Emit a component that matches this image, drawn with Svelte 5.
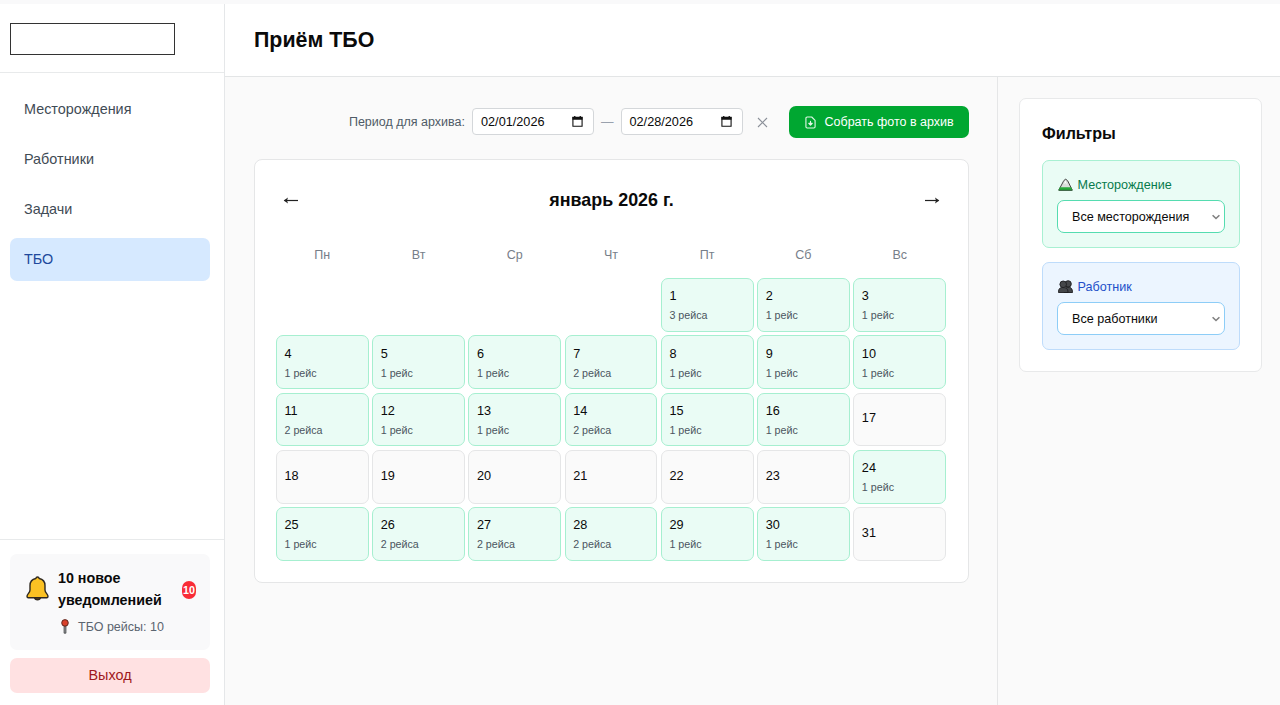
<script>
  const navItems = ['Месторождения', 'Работники', 'Задачи', 'ТБО'];
  let activeItem = $state('ТБО');

  const weekdays = ['Пн', 'Вт', 'Ср', 'Чт', 'Пт', 'Сб', 'Вс'];
  const offset = 4;

  // trips per day, index 0 is the 1st
  const trips = [
    3, 1, 1,
    1, 1, 1, 2, 1, 1, 1,
    2, 1, 1, 2, 1, 1, 0,
    0, 0, 0, 0, 0, 0, 1,
    1, 2, 2, 2, 1, 1, 0,
  ];

  const period = { from: '02/01/2026', to: '02/28/2026' };

  const tripLabel = (n) => (n === 1 ? `${n} рейс` : `${n} рейса`);
</script>

{#snippet dateField(value)}
  <button class="date-field">
    <span>{value}</span>
    <svg width="11" height="11" viewBox="0 0 12 12">
      <path d="M1 1.5h10v9.7H1z" fill="none" stroke="#111" stroke-width="1.2"/>
      <path d="M.5 1h11v3H.5zM2.3 0h1.4v2H2.3zM8.3 0h1.4v2H8.3z" fill="#111"/>
    </svg>
  </button>
{/snippet}

{#snippet selectField(value)}
  <button class="select-field">
    <span>{value}</span>
    <svg width="8" height="6" viewBox="0 0 8 6" fill="none" stroke="#808080" stroke-width="1.6">
      <path d="M.6 1.2L4 4.5l3.4-3.3"/>
    </svg>
  </button>
{/snippet}

<div class="app">
  <!-- Sidebar -->
  <aside class="sidebar">
    <div class="logo-area">
      <div class="logo"></div>
    </div>
    <nav>
      {#each navItems as item}
        <button class="nav-item" class:active={item === activeItem} onclick={() => (activeItem = item)}>{item}</button>
      {/each}
    </nav>
    <div class="sidebar-footer">
      <div class="notice">
        <div class="notice-main">
          <svg class="bell" width="23" height="25" viewBox="0 0 23 25" stroke="#30291f" stroke-width="1.4" stroke-linejoin="round">
            <path d="M8.500 21.500c.5 3 5.500 3 6 0z" fill="#8a5a14"/>
            <path d="M11.500 1c-1 0-1.500.6-1.700 1.500C6 3.300 4 6 4 9.500V14c0 2.800-3 4.200-3 6.200 0 .9.5 1.500 1.300 1.500h18.400c.8 0 1.300-.6 1.300-1.500 0-2-3-3.400-3-6.200V9.500c0-3.500-2-6.200-5.800-7C13 1.600 12.500 1 11.500 1z" fill="#fbc123"/>
          </svg>
          <div class="notice-title">10 новое уведомленией</div>
          <span class="badge">10</span>
        </div>
        <div class="notice-detail">
          <svg width="8" height="15" viewBox="0 0 8 15">
            <path d="M3 6h2v8.200H3z" fill="#8a8f93" stroke="#444" stroke-width=".7"/>
            <circle cx="4" cy="3.900" r="3.300" fill="#d9412b" stroke="#54251d" stroke-width=".9"/>
          </svg>
          <span>ТБО рейсы: 10</span>
        </div>
      </div>
      <button class="logout">Выход</button>
    </div>
  </aside>

  <main>
    <header>
      <h1>Приём ТБО</h1>
    </header>
    <div class="body">
      <section class="content">
        <!-- Archive toolbar -->
        <div class="toolbar">
          <span class="period-label">Период для архива:</span>
          {@render dateField(period.from)}
          <span class="dash">—</span>
          {@render dateField(period.to)}
          <button class="clear" aria-label="Сбросить">
            <svg width="11" height="11" viewBox="0 0 11 11" stroke="#8b9099" stroke-width="1.100">
              <path d="M1 1l9 9M10 1l-9 9"/>
            </svg>
          </button>
          <button class="archive">
            <svg width="11" height="13" viewBox="0 0 12 14" fill="none" stroke="#e4f8e9" stroke-width="1.200" stroke-linecap="round" stroke-linejoin="round">
              <path d="M7.300 1H2.400C1.600 1 1 1.600 1 2.400v9.200c0 .8.6 1.400 1.400 1.400h7.200c.8 0 1.400-.6 1.400-1.400V4.700z"/>
              <path d="M6 5.600v4.200M4.100 8L6 9.900 7.900 8z" fill="#e4f8e9"/>
            </svg>
            <span>Собрать фото в архив</span>
          </button>
        </div>

        <!-- Calendar -->
        <div class="calendar">
          <div class="month-bar">
            <button class="arrow" aria-label="Назад">
              <svg width="15" height="9" viewBox="0 0 15 9" fill="none" stroke="#222" stroke-width="1.200">
                <path d="M1.500 4.500H15"/><path d="M5 1.500l-4.300 3L5 7.500l-1-3z" fill="#222" stroke="none"/>
              </svg>
            </button>
            <h2>январь 2026 г.</h2>
            <button class="arrow" aria-label="Вперёд">
              <svg width="15" height="9" viewBox="0 0 15 9" fill="none" stroke="#222" stroke-width="1.200">
                <path d="M0 4.500h13.500"/><path d="M10 1.500l4.300 3-4.300 3 1-3z" fill="#222" stroke="none"/>
              </svg>
            </button>
          </div>
          <div class="weekdays">
            {#each weekdays as day}
              <div>{day}</div>
            {/each}
          </div>
          <div class="days">
            {#each Array(offset) as _}
              <div></div>
            {/each}
            {#each trips as count, i}
              <div class="day" class:has-trips={count > 0}>
                <div class="number">{i + 1}</div>
                {#if count}
                  <div class="trips">{tripLabel(count)}</div>
                {/if}
              </div>
            {/each}
          </div>
        </div>
      </section>

      <!-- Filters -->
      <aside class="filters">
        <div class="filter-card">
          <h3>Фильтры</h3>
          <div class="filter green">
            <div class="filter-label">
              <svg width="15" height="13" viewBox="0 0 15 13">
                <path d="M.8 12L5.500 3.200 7.500 1l2.200 1.800L14.200 12z" fill="#d9dedb" stroke="#444" stroke-width="1" stroke-linejoin="round"/>
                <path d="M7.500 2.500L6 6l1.500-1L9 7z" fill="#fff"/>
                <path d="M1.800 9.300h11.400l1.200 3H.6z" fill="#27a83b"/>
                <path d="M.5 12.300h14" stroke="#244a2b" stroke-width=".8"/>
              </svg>
              <span>Месторождение</span>
            </div>
            {@render selectField('Все месторождения')}
          </div>
          <div class="filter blue">
            <div class="filter-label">
              <svg width="15" height="13" viewBox="0 0 15 13" fill="#45474a" stroke="#1d1d1f" stroke-width=".9">
                <path d="M6 12.500c0-4 1.300-5.500 4-5.500s4.500 1.500 4.500 5.500z"/>
                <circle cx="10.100" cy="3.900" r="3.200"/>
                <path d="M.5 12.500c0-4 1.300-5 4.500-5s5 1 5 5z"/>
                <circle cx="5.200" cy="4.300" r="3.300"/>
              </svg>
              <span>Работник</span>
            </div>
            {@render selectField('Все работники')}
          </div>
        </div>
      </aside>
    </div>
  </main>
</div>

<style>
  :global(body) {
    background: #f9f9fa;
    overflow: hidden;
  }

  .app {
    display: flex;
    box-sizing: border-box;
    height: 705px;
    padding-top: 4px;
    font-family: 'Liberation Sans', Arial, sans-serif;
    color: #0a0a0a;
    background: #f9f9fa;
  }

  .app * { box-sizing: border-box; }

  button {
    font: inherit;
    color: inherit;
    background: none;
    border: none;
    padding: 0;
    cursor: pointer;
  }

  svg { display: block; flex: none; }
  h1, h2, h3 { margin: 0; font-weight: 700; }

  .sidebar {
    display: flex;
    flex-direction: column;
    flex: none;
    width: 225px;
    background: #fff;
    border-right: 1px solid #e5e7e9;
  }

  .logo-area {
    height: 69px;
    padding: 19px 10px;
    border-bottom: 1px solid #e8eaeb;
  }

  .logo {
    width: 165px;
    height: 32px;
    border: 1px solid #333;
  }

  nav {
    display: flex;
    flex-direction: column;
    gap: 7px;
    flex: 1;
    padding: 15px 14px 0 10px;
  }

  .nav-item {
    height: 43px;
    padding: 0 14px 2px;
    text-align: left;
    font-size: 14.4px;
    color: #3f4b55;
    border-radius: 7px;
  }

  .nav-item.active {
    background: #d6e9ff;
    color: #20489c;
  }

  .sidebar-footer {
    padding: 14px 14px 12px 10px;
    border-top: 1px solid #e8eaeb;
  }

  .notice {
    height: 96px;
    margin-bottom: 8px;
    padding: 14px 14px 0 16px;
    background: #f9f9fa;
    border-radius: 7px;
  }

  .notice-main {
    display: flex;
    align-items: center;
  }

  .bell { margin-bottom: 2px; }

  .notice-title {
    width: 124px;
    margin-left: 9px;
    font-size: 14.3px;
    font-weight: 700;
    line-height: 21.5px;
  }

  .badge {
    flex: none;
    width: 14px;
    height: 18px;
    line-height: 18px;
    text-align: center;
    font-size: 10.7px;
    font-weight: 700;
    color: #fff;
    background: #f92c37;
    border-radius: 7px;
  }

  .notice-detail {
    display: flex;
    align-items: center;
    gap: 9px;
    margin: 8px 0 0 35px;
    font-size: 12.5px;
    color: #5b6570;
  }

  .logout {
    width: 100%;
    height: 35px;
    padding-bottom: 2px;
    font-size: 14.4px;
    color: #9f1820;
    background: #ffe1e2;
    border-radius: 7px;
  }

  main {
    display: flex;
    flex-direction: column;
    flex: 1;
  }

  header {
    display: flex;
    align-items: center;
    height: 73px;
    padding-left: 29px;
    background: #fff;
    border-bottom: 1px solid #e3e5e6;
  }

  h1 { font-size: 21.4px; }

  .body {
    display: flex;
    flex: 1;
    background: #fafafa;
  }

  .content {
    flex: 1;
    padding: 29px 28.5px 0 28.5px;
  }

  .toolbar {
    display: flex;
    align-items: center;
    justify-content: flex-end;
    height: 32px;
    margin-bottom: 21px;
    font-size: 12.5px;
  }

  .period-label { color: #4f5b67; margin-right: 7px; }

  .date-field {
    display: flex;
    align-items: center;
    justify-content: space-between;
    width: 122px;
    height: 27px;
    margin-bottom: 1px;
    padding: 0 10px 0 8px;
    font-size: 12.7px;
    background: #fff;
    border: 1px solid #d4d7da;
    border-radius: 4px;
  }

  .dash { margin: 0 7px; color: #99a1ad; }
  .clear { margin: 0 21px 0 14px; }

  .archive {
    display: flex;
    align-items: center;
    gap: 9px;
    width: 180px;
    height: 32px;
    padding-left: 16px;
    color: #fff;
    background: #00a731;
    border-radius: 7px;
  }

  .calendar {
    height: 424px;
    padding: 21px 21.5px 0 21.5px;
    background: #fff;
    border: 1px solid #e5e6e7;
    border-radius: 8px;
  }

  .month-bar {
    display: flex;
    align-items: center;
    justify-content: space-between;
    height: 38px;
    padding: 0 6px 0 7px;
  }

  h2 { font-size: 17.9px; }

  .weekdays, .days {
    display: grid;
    grid-template-columns: repeat(7, 1fr);
    column-gap: 3.6px;
  }

  .weekdays {
    margin: 21px 0 7px;
    height: 31px;
    line-height: 31px;
    text-align: center;
    font-size: 12.5px;
    color: #777e89;
  }

  .days { grid-auto-rows: 53.7px; row-gap: 3.6px; }

  .day {
    display: flex;
    flex-direction: column;
    justify-content: center;
    padding: 0 7.5px 2px;
    background: #fafafa;
    border: 1px solid #e5e6e7;
    border-radius: 7px;
  }

  .day.has-trips {
    padding: 2px 7.5px 0;
    background: #eafcf5;
    border-color: #a6efd0;
  }

  .number { font-size: 12.7px; line-height: 18px; font-weight: 500; }
  .trips { margin-top: 2px; font-size: 10.7px; line-height: 17px; color: #4a5560; }

  .filters {
    flex: none;
    width: 283px;
    padding: 21px 18px 0 21px;
    border-left: 1px solid #e5e6e7;
  }

  .filter-card {
    height: 274px;
    padding: 22px 21px 0 22px;
    background: #fff;
    border: 1px solid #e8e9ea;
    border-radius: 7px;
  }

  h3 { font-size: 16.1px; line-height: 24px; margin-bottom: 15px; }

  .filter {
    height: 88px;
    margin-bottom: 14px;
    padding: 14px;
    border: 1px solid;
    border-radius: 7px;
  }

  .filter.green { background: #eafcf5; border-color: #a8f0d2; }
  .filter.blue { background: #ecf5ff; border-color: #bedcfb; }

  .filter-label {
    display: flex;
    align-items: center;
    gap: 5px;
    height: 19px;
    margin-bottom: 6px;
    padding-left: .5px;
    font-size: 12.6px;
  }

  .green .filter-label { color: #077a4c; }
  .blue .filter-label { color: #2350c9; }

  .select-field {
    display: flex;
    align-items: center;
    justify-content: space-between;
    width: 168px;
    height: 33px;
    padding: 0 4px 0 14px;
    font-size: 12.6px;
    background: #fff;
    border: 1px solid;
    border-radius: 7px;
  }

  .green .select-field { border-color: #55dcb0; }
  .blue .select-field { border-color: #8dcdf7; }
</style>
